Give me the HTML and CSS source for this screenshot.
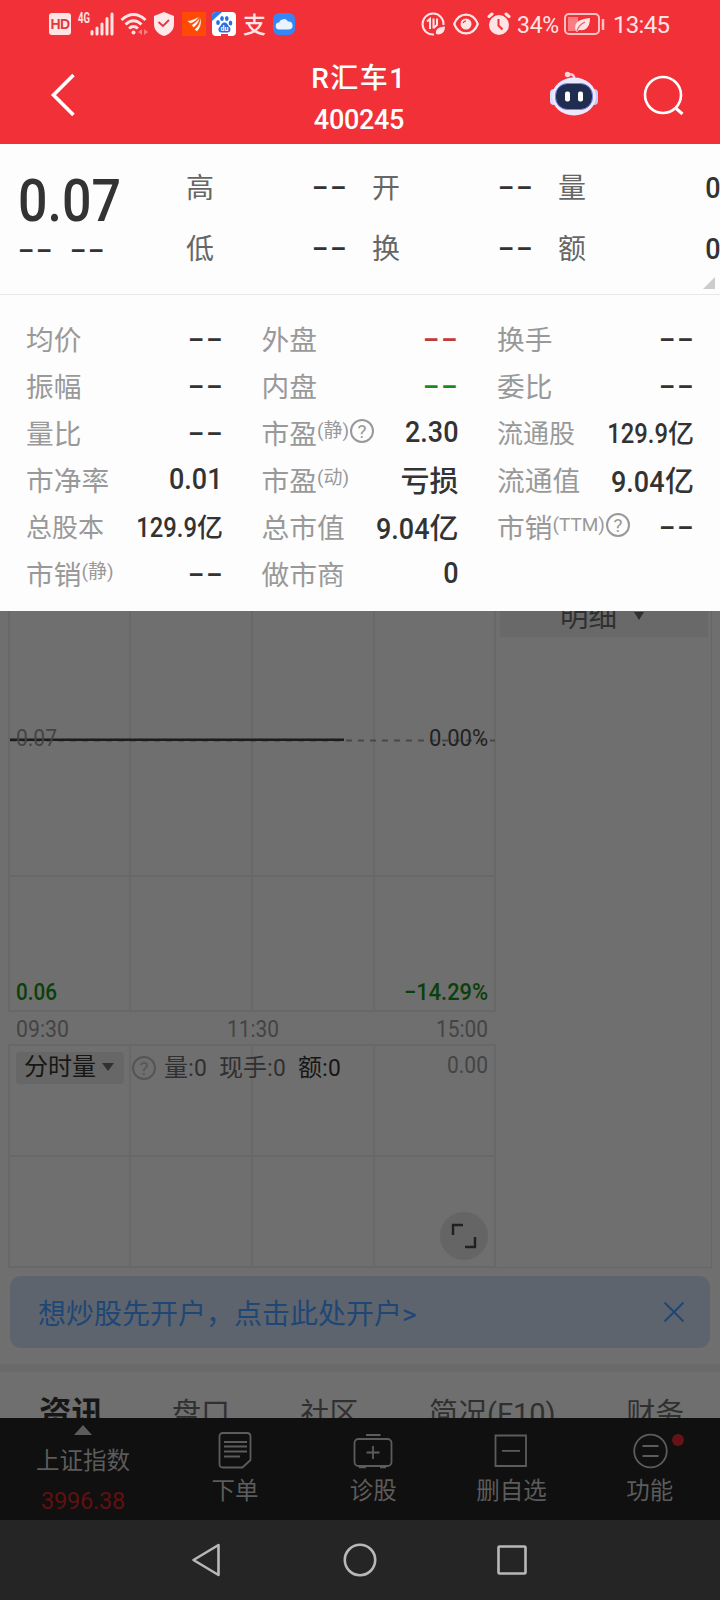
FILE: index.html
```html
<!DOCTYPE html>
<html lang="zh-CN">
<head>
    <meta charset="UTF-8">
    <title>R汇车1 400245</title>
    <link rel="stylesheet" href="styles.css">
</head>
<body>
    <div class="header">
        <div class="status-bar">
            <div class="status-left">
                <span class="hd">HD</span>
                <svg class="signal" width="36" height="24" viewBox="0 0 36 24">
                    <text x="0" y="11" textLength="12" lengthAdjust="spacingAndGlyphs">4G</text>
                    <path d="M14 19.500v2.500M19 16v6M24 12v10M29 6.500v15.500M34 2v20" stroke="#ffe4e5" stroke-width="3" stroke-linecap="round"/>
                </svg>
                <svg class="wifi" width="28" height="24" viewBox="0 0 28 24" fill="none" stroke="#ffe4e5" stroke-width="3">
                    <path d="M1.500 8Q13.500-3 25.500 8M5.500 12.500Q13.500 5 21.500 12.500M9 16.500Q13.500 12.500 18 16.500"/>
                    <circle cx="13.500" cy="20.500" r="2" fill="#ffe4e5" stroke="none"/>
                    <path d="M22 17v6l-4-3zM24 17v6l4-3z" fill="#f97e83" stroke="none"/>
                </svg>
                <svg class="shield" width="22" height="24" viewBox="0 0 22 24">
                    <path d="M11 0l10 4v8c0 6-4 10-10 12C5 22 1 18 1 12V4z" fill="#ffe9ea"/>
                    <path d="M5.500 10l4.500 4 6-6" fill="none" stroke="#e0383f" stroke-width="1.800"/>
                </svg>
                <svg class="app" width="24" height="24" viewBox="0 0 24 24">
                    <rect width="24" height="24" fill="#ff4a06"/>
                    <path d="M5 9C9 8.500 13 7 17 4.500C15 8 12 10.500 8.500 11.500ZM9.500 13C13 11 16 8.500 17.500 5C17.500 10 14.500 13.500 11.500 15.500ZM12.500 17.500C16 15 18 11 18.500 5.500C20 11 18.500 16 15 19.500Z" fill="#fff" stroke="#ff4a06" stroke-width="0.500"/>
                </svg>
                <svg class="app" width="24" height="24" viewBox="0 0 24 24">
                    <rect width="24" height="24" rx="4" fill="#fff"/>
                    <path d="M4 0h6L0 9V4a4 4 0 0 1 4-4z" fill="#2f7bea"/>
                    <g fill="#2a6fe0">
                        <ellipse cx="6" cy="10.500" rx="1.800" ry="2.500"/>
                        <ellipse cx="10" cy="6.500" rx="1.800" ry="2.600"/>
                        <ellipse cx="14.800" cy="6.500" rx="1.800" ry="2.600"/>
                        <ellipse cx="18.500" cy="11" rx="1.800" ry="2.500"/>
                        <path d="M12.500 10.500c3 0 3 2.500 5 4.500s1 5.500-2 5.500H9.500c-3 0-4-3.500-2-5.500s2-4.500 5-4.500z"/>
                        <rect x="9" y="22" width="7" height="2" fill="#e8353c"/>
                    </g>
                    <text x="8.500" y="19" class="du">du</text>
                </svg>
                <span class="alipay">支</span>
                <svg class="cloud" width="22" height="22" viewBox="0 0 22 22">
                    <rect width="22" height="22" rx="6" fill="#3487f5"/>
                    <path d="M6.500 16.500a3.500 3.500 0 0 1-.5-7 5 5 0 0 1 9-1 4 4 0 0 1 1 8z" fill="#e9f4ff"/>
                </svg>
            </div>
            <div class="status-right">
                <svg width="25" height="24" viewBox="0 0 25 24" fill="none" stroke="#ffe4e5" stroke-width="2">
                    <path d="M13 22.500A10.500 10.500 0 1 1 22.500 13"/>
                    <path d="M6 9.500l3-2.500v10M12.500 6.500v10M12.500 16l4-3.500M16 6.500v6"/>
                    <path d="M15 22c-1-5 3-7 9-7.500 0 6-4 9-9 7.500z" fill="#ffe4e5" stroke="none"/>
                </svg>
                <svg class="eye" width="26" height="22" viewBox="0 0 26 22" fill="none" stroke="#ffe4e5" stroke-width="2.200">
                    <path d="M1.200 11C6-1.500 20-1.500 24.800 11C20 23.500 6 23.500 1.200 11z"/>
                    <circle cx="13" cy="11" r="5.500" fill="#ffe4e5" stroke="none"/>
                    <path d="M10 10q1-2 3-2.200" stroke="#f23037" stroke-width="1.200"/>
                </svg>
                <svg class="alarm" width="24" height="24" viewBox="0 0 24 24">
                    <circle cx="12" cy="13" r="10" fill="#ffe4e5"/>
                    <path d="M2 4.500l3-2.500M22 4.500l-3-2.500" stroke="#ffe4e5" stroke-width="3" stroke-linecap="round"/>
                    <path d="M11.500 7v6.500l4 4" fill="none" stroke="#f23037" stroke-width="2"/>
                </svg>
                <span class="battery-text">34%</span>
                <svg class="battery" width="41" height="22" viewBox="0 0 41 22">
                    <rect x="1" y="1" width="34" height="20" rx="4" fill="none" stroke="#ffc0c2" stroke-width="2"/>
                    <rect x="4" y="4" width="10" height="14" fill="#f97e83"/>
                    <path d="M12 18c-3-9 4-12 14-13 0 9-4 13-11 12l-2 2z" fill="#ffe4e5"/>
                    <path d="M13 18c1-4 4-7 8-9" fill="none" stroke="#f45a60" stroke-width="1.200"/>
                    <path d="M39 6v11" stroke="#ffc0c2" stroke-width="2.500"/>
                </svg>
                <span class="clock">13:45</span>
            </div>
        </div>
        <div class="title-bar">
            <div class="title-left">
                <svg width="26" height="46" viewBox="0 0 26 46">
                    <path d="M23.500 3L3.500 23l20 20" fill="none" stroke="#fff" stroke-width="3.600"/>
                </svg>
            </div>
            <div class="title">
                <div class="stock-name">R汇车1</div>
                <div class="stock-code">400245</div>
            </div>
            <div class="title-icons">
                <svg class="robot" width="48" height="45" viewBox="0 0 48 45">
                    <path d="M18 3.500q6-1.500 6.500 4.500" fill="none" stroke="#f8c4d2" stroke-width="2.500"/>
                    <circle cx="17.500" cy="3.500" r="2.700" fill="#fbd5dc"/>
                    <rect x="0" y="18" width="8" height="16" rx="4" fill="#d8dcff"/>
                    <rect x="40" y="18" width="8" height="16" rx="4" fill="#c9c6fb"/>
                    <ellipse cx="24" cy="25.500" rx="22" ry="19" fill="#ece9ff"/>
                    <rect x="5.500" y="12.500" width="37" height="26" rx="12" fill="#202c50" stroke="#7d83e8" stroke-width="1"/>
                    <rect x="15" y="20.500" width="5" height="10" rx="2" fill="#fff"/>
                    <rect x="28" y="20.500" width="5" height="10" rx="2" fill="#fff"/>
                </svg>
                <svg width="42" height="42" viewBox="0 0 42 42" fill="none" stroke="#fff" stroke-width="2.600">
                    <circle cx="20" cy="20" r="18"/>
                    <path d="M32 32.500l7.500 6.500" stroke-width="3"/>
                </svg>
            </div>
        </div>
    </div>

    <!-- Price summary -->
    <div class="summary">
        <div class="price-box">
            <div class="price">0.07</div>
            <div class="change"><span class="dash">--</span><span class="dash">--</span></div>
        </div>
        <div class="summary-grid">
            <div class="cell"><span>高</span><b class="dash">--</b></div>
            <div class="cell"><span>开</span><b class="dash">--</b></div>
            <div class="cell"><span>量</span><b class="num">0</b></div>
            <div class="cell"><span>低</span><b class="dash">--</b></div>
            <div class="cell"><span>换</span><b class="dash">--</b></div>
            <div class="cell"><span>额</span><b class="num">0</b></div>
        </div>
        <div class="corner"></div>
    </div>

    <!-- Details -->
    <div class="details">
        <div class="row"><span>均价</span><b class="dash">--</b></div>
        <div class="row"><span>外盘</span><b class="dash red">--</b></div>
        <div class="row"><span>换手</span><b class="dash">--</b></div>

        <div class="row"><span>振幅</span><b class="dash">--</b></div>
        <div class="row"><span>内盘</span><b class="dash green">--</b></div>
        <div class="row"><span>委比</span><b class="dash">--</b></div>

        <div class="row"><span>量比</span><b class="dash">--</b></div>
        <div class="row"><span>市盈</span><small>(静)</small><i class="help">?</i><b><em class="num">2.30</em></b></div>
        <div class="row small"><span>流通股</span><b><em class="num">129.9</em>亿</b></div>

        <div class="row"><span>市净率</span><b><em class="num">0.01</em></b></div>
        <div class="row"><span>市盈</span><small>(动)</small><b>亏损</b></div>
        <div class="row"><span>流通值</span><b><em class="num">9.04</em>亿</b></div>

        <div class="row small"><span>总股本</span><b><em class="num">129.9</em>亿</b></div>
        <div class="row"><span>总市值</span><b><em class="num">9.04</em>亿</b></div>
        <div class="row"><span>市销</span><small class="ttm">(TTM)</small><i class="help">?</i><b class="dash">--</b></div>

        <div class="row"><span>市销</span><small>(静)</small><b class="dash">--</b></div>
        <div class="row"><span>做市商</span><b><em class="num">0</em></b></div>
    </div>

    <!-- Chart -->
    <div class="chart-area">
        <div class="chart">
            <svg class="price-chart" width="489" height="433" viewBox="8 611 489 433">
                <path d="M9 611v401M130 611v401M252 611v401M374 611v401M495 611v401M8 876h488M8 1011h488" class="grid-line"/>
                <path d="M10 740.500h485" stroke="#484848" stroke-width="2" stroke-dasharray="6 6"/>
                <path d="M10 739.700h334" stroke="#1c1c1c" stroke-width="2.600"/>
                <text x="16" y="746" textLength="41" lengthAdjust="spacingAndGlyphs" class="label">0.07</text>
                <text x="429" y="746" textLength="59" lengthAdjust="spacingAndGlyphs" class="label dark">0.00%</text>
                <text x="16" y="1000" textLength="41" lengthAdjust="spacingAndGlyphs" class="label down">0.06</text>
                <text x="404" y="1000" textLength="84" lengthAdjust="spacingAndGlyphs" class="label down">−14.29%</text>
                <text x="16" y="1037" textLength="53" lengthAdjust="spacingAndGlyphs" class="label">09:30</text>
                <text x="227" y="1037" textLength="52" lengthAdjust="spacingAndGlyphs" class="label">11:30</text>
                <text x="436" y="1037" textLength="52" lengthAdjust="spacingAndGlyphs" class="label">15:00</text>
            </svg>
            <div class="volume">
                <svg class="volume-grid" width="489" height="224" viewBox="8 1044 489 224">
                    <path d="M9 1044v224M130 1044v224M252 1044v224M374 1044v224M495 1044v224M8 1045h488M8 1156h488M8 1267h488" class="grid-line"/>
                    <text x="447" y="1073" textLength="41" lengthAdjust="spacingAndGlyphs" class="label">0.00</text>
                </svg>
                <div class="volume-head">
                    <div class="volume-type">分时量<i class="arrow"></i></div>
                    <i class="help dim">?</i>
                    <span class="v1">量:<em>0</em></span>
                    <span class="v2">现手:<em>0</em></span>
                    <span class="v3">额:<em>0</em></span>
                </div>
                <div class="expand">
                    <svg width="26" height="26" viewBox="0 0 26 26">
                        <path d="M2 12V2H12M14 24h10V14" fill="none" stroke="#202020" stroke-width="2.400"/>
                    </svg>
                </div>
            </div>
        </div>
        <div class="side">
            <div class="side-tab">明细<i class="arrow"></i></div>
        </div>
    </div>

    <div class="banner">
        <span>想炒股先开户，点击此处开户&gt;</span>
        <svg width="20" height="20" viewBox="0 0 20 20">
            <path d="M0.500 0.500l19 19M19.500 0.500l-19 19" stroke="#1f4775" stroke-width="2"/>
        </svg>
    </div>

    <div class="tabs">
        <span class="active">资讯</span>
        <span>盘口</span>
        <span>社区</span>
        <span>简况(F10)</span>
        <span>财务</span>
    </div>

    <div class="bottom-bar">
        <div class="index">
            <i class="up"></i>
            <span>上证指数</span>
            <span class="index-value">3996.38</span>
        </div>
        <div class="tool">
            <svg width="40" height="38" viewBox="0 0 40 38">
                <path d="M8 2h24q3.500 0 3.500 3.500V29l-8 7.500H8q-3.500 0-3.500-3.500V5.500Q4.500 2 8 2zM9 11h23M9 15.500h23M9 20.500h23M9 25.500h16"/>
            </svg>
            <span>下单</span>
        </div>
        <div class="tool">
            <svg width="40" height="38" viewBox="0 0 40 38">
                <rect x="1.500" y="8" width="37" height="27" rx="4"/>
                <path d="M13 4h14.500M20 15v13M13.500 21.500h13M6 36.300h7M27 36.300h6"/>
            </svg>
            <span>诊股</span>
        </div>
        <div class="tool">
            <svg width="40" height="38" viewBox="0 0 40 38">
                <path d="M4.500 4.500h30.500v30.500H4.500zM11 19.800h18"/>
            </svg>
            <span>删自选</span>
        </div>
        <div class="tool">
            <svg width="40" height="38" viewBox="0 0 40 38">
                <circle cx="20.500" cy="20" r="16.300"/>
                <path d="M12.500 15h16M12.500 25h16"/>
            </svg>
            <i class="dot"></i>
            <span>功能</span>
        </div>
    </div>

    <div class="nav-bar">
        <svg width="34" height="34" viewBox="0 0 34 34"><path d="M27.500 2v30L2.500 17z"/></svg>
        <svg width="34" height="34" viewBox="0 0 34 34"><circle cx="17" cy="17" r="15.200"/></svg>
        <svg width="34" height="34" viewBox="0 0 34 34"><rect x="3.500" y="3.500" width="27" height="27" rx="1"/></svg>
    </div>
</body>
</html>
```

FILE: styles.css
```css
* {
    box-sizing: border-box;
}

body {
    margin: 0;
    width: 720px;
    height: 1600px;
    overflow: hidden;
    background: #6f6f6f;
    font-family: Roboto, "Noto Sans CJK SC", sans-serif;
    color: #333;
}

svg {
    display: block;
    flex: none;
}

b, i, em {
    font-style: normal;
    font-weight: normal;
}

/* Header */
.header {
    height: 144px;
    background: #f23037;
    color: #fff;
}

.status-bar {
    height: 48px;
    display: flex;
    justify-content: space-between;
    padding: 0 50px 0 49px;
    color: #ffe4e5;
}

.status-left,
.status-right {
    display: flex;
    align-items: center;
}

.hd {
    width: 22px;
    height: 22px;
    border-radius: 3px;
    background: #ffe4e5;
    color: #e0383f;
    font: bold 14px/22px "Liberation Sans", sans-serif;
    text-align: center;
    letter-spacing: -0.5px;
}

.signal {
    margin-left: 7px;
    overflow: visible;
}

.signal text {
    font: bold 14px Roboto, sans-serif;
    fill: #ffe4e5;
}

.wifi {
    margin-left: 6px;
}

.shield {
    margin-left: 5px;
}

.app {
    margin-left: 6px;
}

.shield + .app {
    margin-left: 7px;
}

.du {
    font: bold 7px Roboto, sans-serif;
    fill: #fff;
}

.alipay {
    margin-left: 7px;
    width: 23px;
    height: 26px;
    font: 500 23px/24px "Noto Sans CJK SC", sans-serif;
}

.cloud {
    margin-left: 7px;
}

.eye {
    margin-left: 7px;
}

.alarm {
    margin-left: 8px;
}

.battery-text {
    margin-left: 6px;
    width: 42px;
    font-size: 23px;
    letter-spacing: -0.3px;
    padding-top: 2px;
}

.battery {
    margin-left: 5px;
}

.clock {
    margin-left: 8px;
    width: 57px;
    font-size: 24px;
    letter-spacing: -0.7px;
    padding-top: 2px;
}

.title-bar {
    height: 96px;
    display: flex;
    justify-content: space-between;
    padding: 0 35px 0 50px;
}

.title-left,
.title-icons {
    display: flex;
    align-items: center;
}

.title-left {
    width: 229px;
    padding-bottom: 3px;
}

.title {
    width: 160px;
    padding-top: 11px;
    text-align: center;
    font-weight: 500;
}

.stock-name {
    font-size: 28px;
    line-height: 40px;
    letter-spacing: 1.5px;
}

.stock-code {
    font-size: 27px;
    line-height: 43px;
    letter-spacing: -0.3px;
}

.title-icons {
    width: 246px;
    justify-content: flex-end;
    gap: 45px;
}

.robot {
    margin-bottom: 5px;
}

/* Numbers and placeholders */
.num {
    display: inline-block;
    font-size: 29px;
    font-weight: 500;
    transform: scaleX(0.93);
    transform-origin: right center;
}

.dash {
    display: inline-block;
    white-space: nowrap;
    font: bold 29px/34px "Liberation Sans", sans-serif;
    letter-spacing: 1px;
    transform: scale(1.7, 0.8);
    transform-origin: right center;
}

/* Summary */
.summary {
    position: relative;
    display: flex;
    height: 151px;
    background: #fdfdfd;
    border-bottom: 1px solid #e8e8e8;
}

.price-box {
    width: 186px;
    padding: 21px 0 0 18px;
}

.price {
    font-size: 60px;
    line-height: 72px;
    font-weight: 500;
    transform: scaleX(0.865);
    transform-origin: left center;
}

.change {
    display: flex;
    gap: 30px;
    height: 28px;
    margin-top: -4px;
}

.change .dash {
    width: 22px;
    transform-origin: left center;
}

.summary-grid {
    display: grid;
    grid-template-columns: repeat(3, 161px);
    grid-auto-rows: 61px;
    column-gap: 25px;
    padding-top: 13px;
}

.cell {
    display: flex;
    justify-content: space-between;
    align-items: center;
    font-size: 28px;
    line-height: 40px;
    color: #666;
}

.cell b {
    color: #333;
}

.cell span {
    margin-bottom: -2px;
    margin-top: 1px;
}

.cell .num {
    padding-top: 1px;
    margin-right: -1px;
}

.cell .dash {
    margin-right: -1px;
    margin-bottom: 4px;
}

.corner {
    position: absolute;
    right: 5px;
    bottom: 5px;
    border-left: 12px solid transparent;
    border-bottom: 12px solid #ccc;
}

/* Details */
.details {
    display: grid;
    grid-template-columns: repeat(3, 197px);
    grid-auto-rows: 47px;
    column-gap: 38.5px;
    height: 316px;
    padding: 19px 0 0 26px;
    background: #fdfdfd;
}

.row {
    display: flex;
    align-items: center;
    white-space: nowrap;
    font-size: 27.7px;
    color: #999;
}

.row b {
    margin-left: auto;
    color: #333;
    font-weight: 500;
}

.row b:not(.dash) {
    font-size: 29px;
}

.row .dash {
    font-weight: bold;
    margin-right: -1px;
}

.row b.red {
    color: #c0393b;
}

.row b.green {
    color: #1d8a1d;
}

.row.small,
.row.small b {
    font-size: 26px;
}

.row.small .num {
    font-size: 27px;
    transform: scaleX(0.88);
}

.row small {
    font-size: 19px;
    line-height: 22px;
    margin-bottom: 1px;
}

.row .ttm {
    font-size: 19px;
}

.help {
    flex: none;
    width: 24px;
    height: 24px;
    margin: 0 0 1px 1px;
    border: 2px solid #999;
    border-radius: 50%;
    font-size: 19px;
    line-height: 21px;
    text-align: center;
}

/* Chart */
.chart-area {
    display: flex;
    height: 657px;
    padding-left: 8px;
}

.chart {
    width: 489px;
}

.grid-line {
    fill: none;
    stroke: #686868;
    stroke-width: 2;
}

.label {
    font-family: Roboto, sans-serif;
    font-size: 24px;
    fill: #444;
}

.label.dark {
    fill: #222;
}

.label.down {
    fill: #0a400a;
    font-weight: 500;
}

.volume {
    position: relative;
    height: 224px;
}

.volume-grid {
    position: absolute;
    left: 0;
    top: 0;
}

.volume-head {
    position: relative;
    display: flex;
    align-items: center;
    height: 32px;
    margin: 0 0 0 8px;
    top: 8px;
    font-size: 24px;
    line-height: 32px;
    color: #303030;
    white-space: nowrap;
}

.volume-head span {
    margin-bottom: 1px;
}

.volume-head em {
    display: inline-block;
    transform: scaleX(0.95);
    transform-origin: left center;
}

.volume-type {
    display: flex;
    align-items: center;
    justify-content: space-between;
    width: 108px;
    height: 32px;
    padding: 0 10px 2px 8px;
    border-radius: 4px;
    background: #676767;
    color: #161616;
}

.arrow {
    border: 6px solid transparent;
    border-top: 8px solid #303030;
    border-bottom: 0;
}

.help.dim {
    margin: 0 8px 0 8px;
    border-color: #555;
    color: #555;
}

.v1 {
    width: 55px;
}

.v2 {
    width: 79px;
}

.v3 {
    color: #161616;
}

.expand {
    position: absolute;
    right: 9px;
    bottom: 8px;
    width: 48px;
    height: 48px;
    border-radius: 50%;
    background: #656565;
    display: flex;
    align-items: center;
    justify-content: center;
}

.side {
    width: 215px;
    padding-left: 3px;
    border-right: 1px solid #666;
    border-bottom: 1px solid #666;
}

.side-tab {
    display: flex;
    align-items: flex-start;
    width: 208px;
    height: 26px;
    padding-left: 60px;
    background: #696969;
    color: #303030;
    font-size: 28.5px;
    line-height: 13px;
    overflow: hidden;
}

.side-tab .arrow {
    margin: 1px 0 0 17px;
    border-width: 8px 5px 0;
}

/* Open account banner */
.banner {
    display: flex;
    align-items: center;
    justify-content: space-between;
    height: 72px;
    margin: 8px 10px 16px;
    padding: 0 26px 0 28px;
    border-radius: 11px;
    background: #5d646e;
    color: #1f4775;
    font-size: 28px;
}

.tabs {
    display: flex;
    height: 54px;
    overflow: hidden;
    padding-left: 39px;
    border-top: 8px solid #6a6a6a;
    font-size: 29px;
    line-height: 84px;
    color: #303030;
    white-space: nowrap;
}

.tabs span {
    margin-right: 70.5px;
}

.tabs .active {
    font-size: 32.5px;
    font-weight: bold;
    color: #161616;
    margin-right: 68px;
}

/* Bottom bar */
.bottom-bar {
    display: flex;
    height: 102px;
    background: #101010;
    color: #5c5c5c;
    font-size: 23.5px;
    text-align: center;
}

.index {
    width: 166px;
    display: flex;
    flex-direction: column;
    align-items: center;
    padding-top: 7px;
}

.up {
    border: 9px solid transparent;
    border-bottom: 10px solid #5c5c5c;
    border-top: 0;
}

.index span {
    line-height: 24px;
    margin-top: 14px;
}

.index .index-value {
    margin-top: 16px;
    font-size: 23.5px;
    letter-spacing: -0.2px;
    color: #601010;
}

.tool {
    position: relative;
    width: 138.2px;
    display: flex;
    flex-direction: column;
    align-items: center;
    padding-top: 13px;
}

.tool svg {
    fill: none;
    stroke: #5c5c5c;
    stroke-width: 1.8;
}

.tool span {
    line-height: 24px;
    margin-top: 10px;
}

.dot {
    position: absolute;
    left: 91px;
    top: 16px;
    width: 12px;
    height: 12px;
    border-radius: 50%;
    background: #651416;
}

/* System navigation */
.nav-bar {
    display: flex;
    justify-content: center;
    align-items: center;
    gap: 118px;
    height: 80px;
    background: #252525;
}

.nav-bar svg {
    fill: none;
    stroke: #b8b8b8;
    stroke-width: 2.6;
    stroke-linejoin: round;
}
```
